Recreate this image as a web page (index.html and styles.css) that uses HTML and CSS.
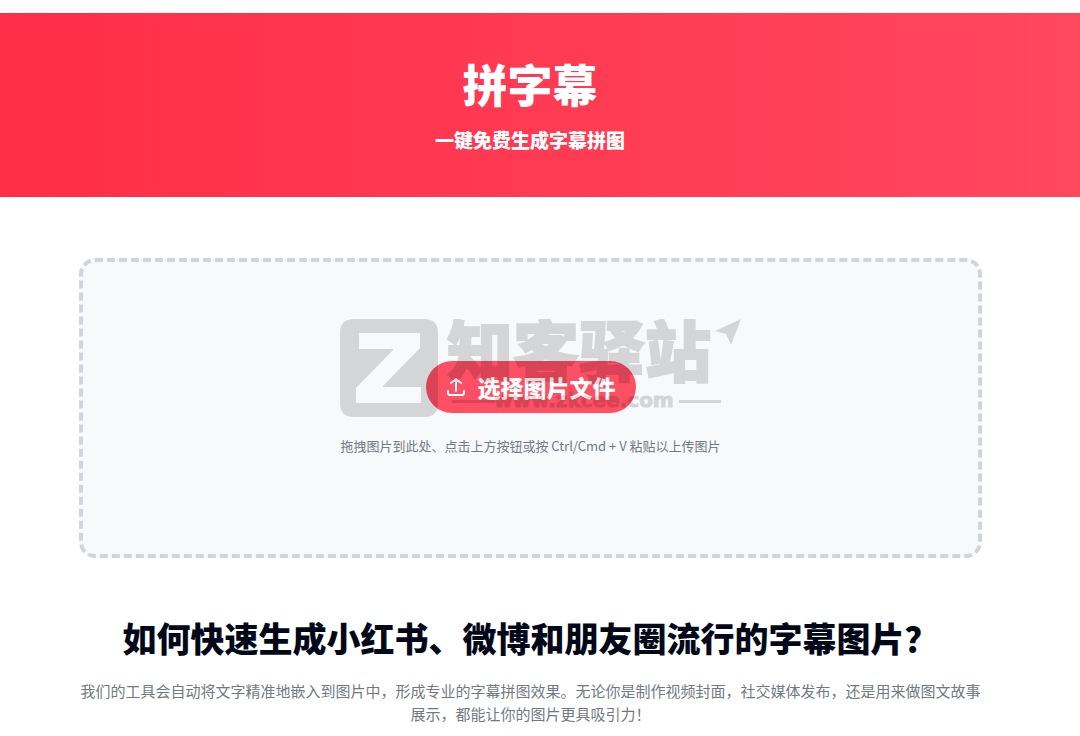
FILE: index.html
```html
<!DOCTYPE html>
<html lang="zh-CN">
<head>
  <meta charset="UTF-8">
  <meta name="viewport" content="width=device-width, initial-scale=1.0">
  <title>拼字幕</title>
  <link rel="stylesheet" href="styles.css">
</head>
<body>
  <header class="header">
    <h1>拼字幕</h1>
    <p>一键免费生成字幕拼图</p>
  </header>

  <main class="container">
    <section class="upload-area">
      <button type="button" class="upload-btn">
        <svg class="upload-icon" viewBox="0 0 20 20" aria-hidden="true">
          <path d="M2 14v2a2 2 0 0 0 2 2h12a2 2 0 0 0 2-2v-2M10 14V3M5 6l5-4 5 4"/>
        </svg>
        选择图片文件
      </button>
      <p class="upload-hint">拖拽图片到此处、点击上方按钮或按 Ctrl/Cmd + V 粘贴以上传图片</p>

      <!-- 水印 -->
      <div class="watermark">
        <svg width="402" height="100" viewBox="0 0 402 100">
          <g>
            <path fill-rule="evenodd" d="M14 0H84Q98 0 98 14V84Q98 98 84 98H14Q0 98 0 84V14Q0 0 14 0ZM19 14V30H54L16 69V84H81V68H42L80 29V14Z"/>
            <text class="watermark-name" x="107" y="57">知客驿站</text>
            <path d="M401 0L375 12L386 15L391 26Z"/>
            <path d="M112 81H155V84H112ZM339 81H381V84H339Z"/>
            <text class="watermark-url" x="154" y="88">www.zkcee.com</text>
          </g>
        </svg>
      </div>
    </section>

    <section class="intro">
      <h2>如何快速生成小红书、微博和朋友圈流行的字幕图片？</h2>
      <p>我们的工具会自动将文字精准地嵌入到图片中，形成专业的字幕拼图效果。无论你是制作视频封面，社交媒体发布，还是用来做图文故事展示，都能让你的图片更具吸引力！</p>
    </section>
  </main>
</body>
</html>
```

FILE: styles.css
```css
* {
  box-sizing: border-box;
}
body {
  margin: 0;
  padding-top: 13px;
  background: #fff;
  font-family: "Noto Sans CJK SC", sans-serif;
}
h1, h2, p {
  margin: 0;
}
.header {
  padding: 47px 20px 43px 0;
  text-align: center;
  color: #fff;
  background: linear-gradient(90deg, #ff2d48, #ff475d);
}
.header h1 {
  font-size: 45px;
  line-height: 48px;
  font-weight: 900;
}
.header p {
  margin-top: 18px;
  font-size: 19px;
  line-height: 28px;
  font-weight: 900;
}
.container {
  padding: 61px 98px 0 79px;
}
.upload-area {
  position: relative;
  display: flex;
  flex-direction: column;
  align-items: center;
  gap: 23px;
  min-height: 300px;
  padding-top: 99px;
  border: 4px dashed #d1d5db;
  border-radius: 16px;
  background: #f8f9fb;
}
.upload-btn {
  display: flex;
  align-items: center;
  gap: 12px;
  height: 52px;
  padding: 0 20px;
  border: 0;
  border-radius: 26px;
  background: #ff4f64;
  color: #fff;
  font-family: inherit;
  font-size: 23px;
  line-height: 30px;
  font-weight: 900;
  cursor: pointer;
}
.upload-icon {
  width: 20px;
  height: 20px;
  fill: none;
  stroke: #fff;
  stroke-width: 2;
  stroke-linecap: round;
  stroke-linejoin: round;
}
.upload-hint {
  font-size: 13px;
  line-height: 20px;
  color: #737982;
}
.watermark {
  position: absolute;
  top: 57px;
  left: 20px;
  right: 0;
  display: flex;
  justify-content: center;
  opacity: 0.14;
  pointer-events: none;
}
.watermark-name {
  font-size: 66px;
  font-weight: 900;
  stroke: #000;
  stroke-width: 2;
}
.watermark-url {
  font-family: "DejaVu Sans", sans-serif;
  font-size: 20px;
  font-weight: 700;
  stroke: #000;
  stroke-width: 1;
}
.intro {
  padding-top: 55px;
  text-align: center;
}
.intro h2 {
  font-size: 34px;
  line-height: 50px;
  font-weight: 900;
  color: #020817;
}
.intro p {
  margin-top: 16px;
  font-size: 15px;
  line-height: 23px;
  color: #737982;
}
```
